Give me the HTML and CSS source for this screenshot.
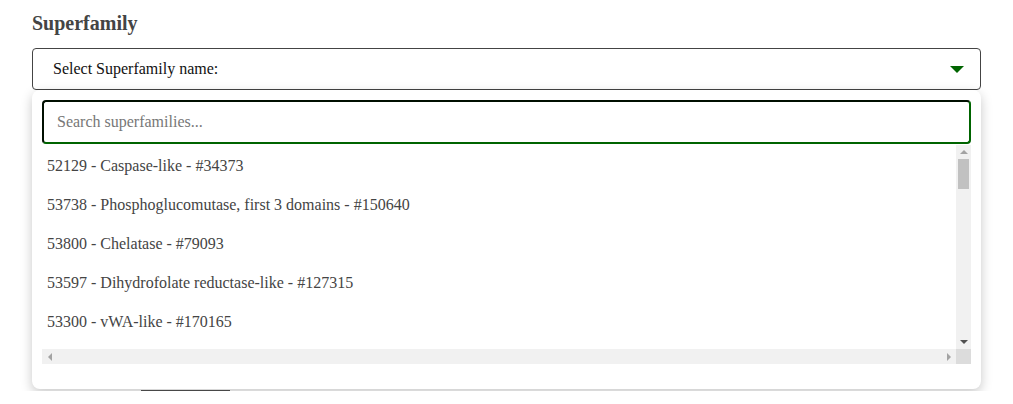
FILE: index.html
```html
<!DOCTYPE html>
<html lang="en">
	<head>
		<meta charset="utf-8">
		<title>Superfamily</title>
		<link rel="stylesheet" href="styles.css">
	</head>
	<body>
		<div class="content">
			<h2 class="titulo">Superfamily</h2>

			<div class="seletor">
				<div class="seletor_caixa">
					<span>Select Superfamily name:</span>
					<span class="seta"></span>
				</div>

				<!-- painel aberto do dropdown -->
				<div class="painel">
					<input type="text" class="busca" placeholder="Search superfamilies...">
					<div class="lista_caixa">
						<ul class="lista">
							<li>52129 - Caspase-like - #34373</li>
							<li>53738 - Phosphoglucomutase, first 3 domains - #150640</li>
							<li>53800 - Chelatase - #79093</li>
							<li>53597 - Dihydrofolate reductase-like - #127315</li>
							<li>53300 - vWA-like - #170165</li>
							<li>52540 - P-loop containing nucleoside triphosphate hydrolases - #201344</li>
							<li>51735 - NAD(P)-binding Rossmann-fold domains - #188210</li>
							<li>53335 - S-adenosyl-L-methionine-dependent methyltransferases - #96422</li>
							<li>56112 - Protein kinase-like (PK-like) - #140022</li>
							<li>48371 - ARM repeat - #73190</li>
						</ul>

						<!-- barras de rolagem desenhadas -->
						<div class="barra_v">
							<span class="btn_rolagem"><i class="tri_cima"></i></span>
							<span class="polegar"></span>
							<span class="btn_rolagem"><i class="tri_baixo"></i></span>
						</div>
						<div class="barra_h">
							<span class="btn_rolagem"><i class="tri_esq"></i></span>
							<span class="btn_rolagem"><i class="tri_dir"></i></span>
						</div>
						<div class="canto"></div>
					</div>
				</div>
			</div>

			<div class="botao_fundo"></div>
		</div>
	</body>
</html>
```

FILE: styles.css
```css
body{
	margin: 0;
	background: #fff;
	font-family: "Liberation Serif", "Times New Roman", serif;
}

.content{
	padding: 11px 32px 0 32px;
}

.titulo{
	margin: 0 0 13px 0;
	font-size: 20px;
	line-height: 24px;
	color: #444;
}

.seletor{
	position: relative;
}

/*caixa fechada do select*/
.seletor_caixa{
	height: 40px;
	border: 1px solid #444;
	border-radius: 4px;
	display: flex;
	align-items: center;
	justify-content: space-between;
	padding: 0 16px 0 20px;
	font-size: 16px;
	color: #111;
}

.seta{
	width: 0;
	height: 0;
	border-left: 7px solid transparent;
	border-right: 7px solid transparent;
	border-top: 7px solid #006400;
	margin-top: 1px;
}

/*painel do dropdown sobre o conteudo*/
.painel{
	position: absolute;
	top: 42px;
	left: 0;
	right: 0;
	background: #fff;
	border-radius: 8px;
	box-shadow: 0 4px 12px rgba(0, 0, 0, 0.22);
	padding: 10px 10px 25px 10px;
	z-index: 2;
}

.busca{
	display: block;
	box-sizing: border-box;
	width: 100%;
	height: 44px;
	border: 2px inset #006400;
	border-radius: 4px;
	padding: 0 13px;
	font-family: "Liberation Serif", "Times New Roman", serif;
	font-size: 16px;
	color: #444;
	outline: none;
}

.busca::placeholder{
	color: #777;
}

/*lista com barras de rolagem*/
.lista_caixa{
	margin-top: 1px;
	display: grid;
	grid-template-columns: 1fr 15px;
	grid-template-rows: 204px 15px;
}

.lista{
	list-style: none;
	margin: 0;
	padding: 1px 0 0 0;
	overflow: hidden;
}

.lista li{
	padding: 10px 5px;
	line-height: 19px;
	font-size: 16px;
	color: #444;
	white-space: nowrap;
}

.barra_v{
	background: #f1f1f1;
	display: flex;
	flex-direction: column;
	align-items: center;
}

.barra_h{
	background: #f1f1f1;
	display: flex;
	justify-content: space-between;
	align-items: center;
}

.canto{
	background: #dcdcdc;
}

.btn_rolagem{
	width: 15px;
	height: 14px;
	display: flex;
	align-items: center;
	justify-content: center;
}

.barra_v .btn_rolagem:last-child{
	margin-top: auto;
}

.polegar{
	width: 11px;
	height: 30px;
	background: #c1c1c1;
}

.tri_cima{
	border-left: 4px solid transparent;
	border-right: 4px solid transparent;
	border-bottom: 4px solid #a3a3a3;
}

.tri_baixo{
	border-left: 4px solid transparent;
	border-right: 4px solid transparent;
	border-top: 4px solid #505050;
}

.tri_esq{
	border-top: 4px solid transparent;
	border-bottom: 4px solid transparent;
	border-right: 4px solid #a3a3a3;
}

.tri_dir{
	border-top: 4px solid transparent;
	border-bottom: 4px solid transparent;
	border-left: 4px solid #a3a3a3;
}

/*borda do botao que fica atras do painel*/
.botao_fundo{
	margin: 260px 0 0 109px;
	width: 89px;
	height: 40px;
	border-bottom: 1px solid #555;
}
```
